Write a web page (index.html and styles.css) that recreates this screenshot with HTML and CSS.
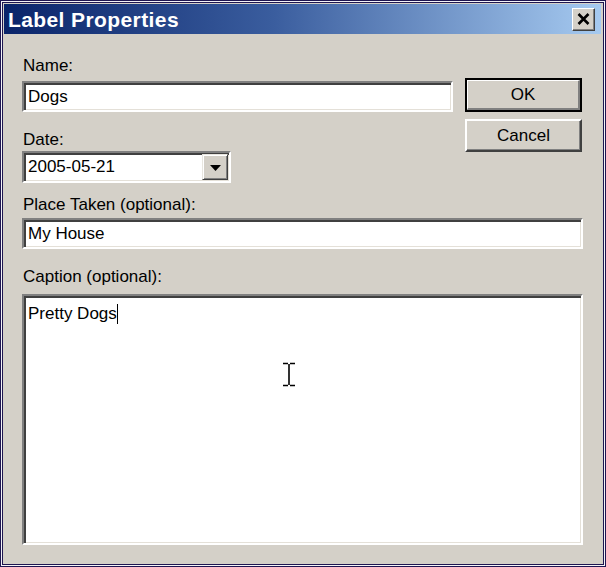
FILE: index.html
```html
<!DOCTYPE html>
<html>
<head>
<meta charset="utf-8">
<link rel="stylesheet" href="styles.css">
</head>
<body>
<div class="window">
  <div class="titlebar">
    <span class="title">Label Properties</span>
    <div class="close"><svg width="13" height="12" viewBox="0 0 13 12"><path d="M1.5 1 L11.5 11 M11.5 1 L1.5 11" stroke="#000" stroke-width="2.6" fill="none"/></svg></div>
  </div>
  <div class="content">
    <div class="top">
      <div class="left">
        <div class="label l-name">Name:</div>
        <div class="field name">Dogs</div>
        <div class="label l-date">Date:</div>
        <div class="field combo">
          <span class="combo-text">2005-05-21</span>
          <div class="drop"><svg width="11" height="6" viewBox="0 0 11 6"><path d="M0 0 H11 L5.5 6 Z" fill="#000"/></svg></div>
        </div>
      </div>
      <div class="buttons">
        <div class="btn ok"><div class="btn-inner">OK</div></div>
        <div class="btn cancel"><div class="btn-inner">Cancel</div></div>
      </div>
    </div>
    <div class="label l-place">Place Taken (optional):</div>
    <div class="field place">My House</div>
    <div class="label l-caption">Caption (optional):</div>
    <div class="field caption">
      <span class="caption-text">Pretty Dogs</span><span class="caret"></span>
      <svg class="ibeam" width="14" height="25" viewBox="0 0 14 25"><path d="M1 1.5 H6 M8 1.5 H13 M7 2 V23 M1 23.5 H6 M8 23.5 H13" stroke="#000" stroke-width="1.6" fill="none"/></svg>
    </div>
  </div>
</div>
</body>
</html>
```

FILE: styles.css
```css
html, body {
  margin: 0;
  padding: 0;
  background: #d4d0c8;
}
.window {
  width: 606px;
  height: 567px;
  box-sizing: border-box;
  border: 1px solid #1e1550;
  box-shadow: inset 0 0 0 1px #f4f4f8, inset 0 0 0 2px #1e1550;
  padding: 3px 4px 4px 3px;
  background: #d4d0c8;
  font-family: "Liberation Sans", Arial, sans-serif;
  color: #000;
  display: flex;
  flex-direction: column;
}
.titlebar {
  height: 30px;
  flex: none;
  background: linear-gradient(to right, #0a246a 0%, #3a5d9e 45%, #a6caf0 100%);
  display: flex;
  align-items: center;
  justify-content: space-between;
  padding: 0 6px 0 4px;
}
.title {
  color: #fff;
  font-weight: bold;
  font-size: 21px;
  letter-spacing: 0.4px;
  margin-top: 1px;
}
.close {
  width: 23px;
  height: 23px;
  box-sizing: border-box;
  background: #d4d0c8;
  border-top: 1px solid #fff;
  border-left: 1px solid #fff;
  border-right: 1px solid #404040;
  border-bottom: 1px solid #404040;
  box-shadow: inset -1px -1px 0 #808080;
  display: flex;
  align-items: center;
  justify-content: center;
}
.content {
  flex: 1;
  padding: 0 18px 0 18px;
  display: flex;
  flex-direction: column;
}
.top {
  display: grid;
  grid-template-columns: 431px 117px;
  column-gap: 12px;
}
.left {
  display: flex;
  flex-direction: column;
}
.label {
  font-size: 17px;
  line-height: 18px;
  padding-left: 1px;
}
.l-name { margin-top: 23px; }
.l-date { margin-top: 19px; }
.l-place { margin-top: 13px; }
.l-caption { margin-top: 19px; }
.field {
  box-sizing: border-box;
  background: #fff;
  border-top: 2px solid #808080;
  border-left: 2px solid #808080;
  border-bottom: 2px solid #fff;
  border-right: 2px solid #fff;
  box-shadow: inset 2px 2px 0 #404040, inset -1px -1px 0 #e4e0d8;
  font-size: 17px;
  display: flex;
  align-items: center;
  padding-left: 4px;
}
.name {
  height: 31px;
  margin-top: 6px;
}
.combo {
  width: 209px;
  height: 32px;
  margin-top: 2px;
  justify-content: space-between;
  padding-right: 1px;
}
.drop {
  width: 26px;
  height: 26px;
  box-sizing: border-box;
  background: #d4d0c8;
  border-top: 1px solid #e8e6e0;
  border-left: 1px solid #e8e6e0;
  border-right: 1px solid #404040;
  border-bottom: 1px solid #404040;
  box-shadow: inset 1px 1px 0 #fff, inset -1px -1px 0 #808080;
  display: flex;
  align-items: center;
  justify-content: center;
  padding-top: 1px;
}
.buttons {
  display: flex;
  flex-direction: column;
  padding-top: 44px;
  gap: 7px;
}
.btn {
  box-sizing: border-box;
  background: #d4d0c8;
  font-size: 17px;
}
.btn-inner {
  height: 100%;
  box-sizing: border-box;
  display: flex;
  align-items: center;
  justify-content: center;
}
.ok {
  height: 34px;
  border: 2px solid #000;
}
.ok .btn-inner {
  border-top: 1px solid #fff;
  border-left: 1px solid #fff;
  border-right: 2px solid #808080;
  border-bottom: 2px solid #808080;
}
.cancel {
  height: 33px;
  border-top: 2px solid #fff;
  border-left: 2px solid #fff;
  border-right: 2px solid #404040;
  border-bottom: 2px solid #404040;
  box-shadow: inset -1px -1px 0 #808080;
}
.place {
  height: 31px;
  margin-top: 4px;
}
.caption {
  height: 251px;
  margin-top: 8px;
  align-items: flex-start;
  padding-top: 8px;
  position: relative;
}
.caption-text {
  line-height: 20px;
}
.caret {
  display: inline-block;
  width: 1px;
  height: 20px;
  background: #000;
  margin-left: 0;
}
.ibeam {
  position: absolute;
  left: 258px;
  top: 66px;
}
```
